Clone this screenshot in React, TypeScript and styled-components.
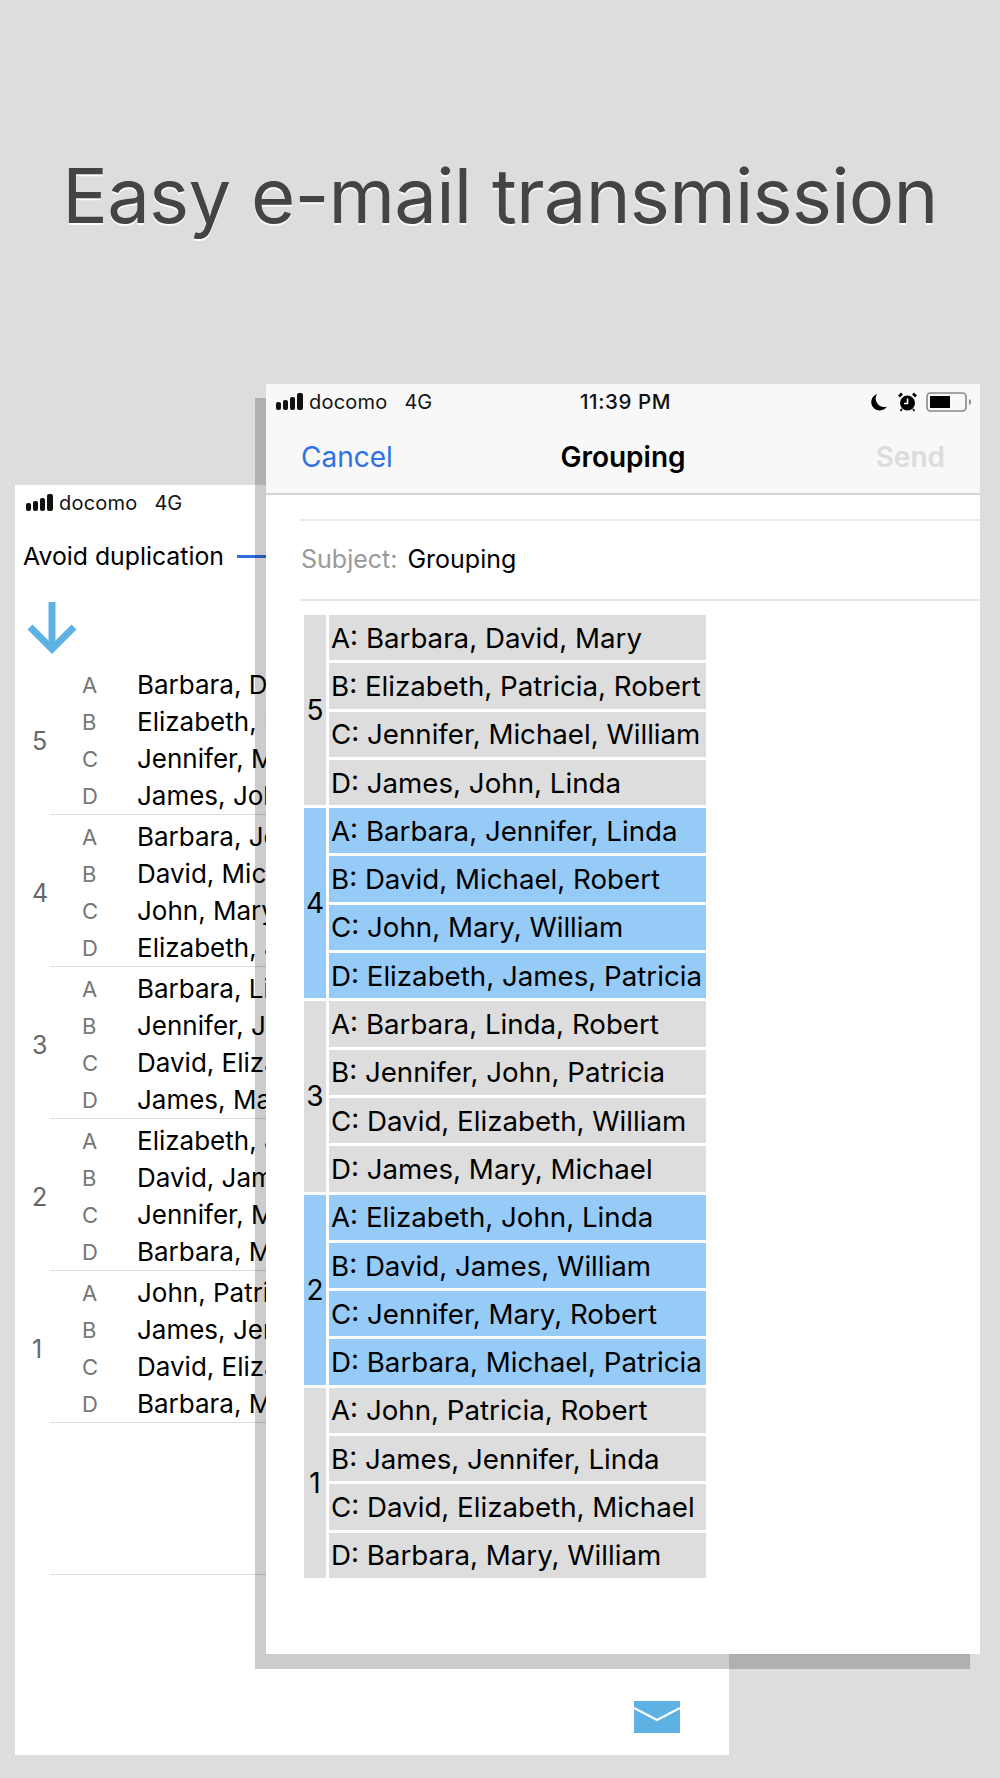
import React from "react";
import styled, { createGlobalStyle } from "styled-components";

const Global = createGlobalStyle`
  html, body { margin: 0; padding: 0; background: #dddddd; }
  * { box-sizing: border-box; }
`;

const FONT = `Inter, "Liberation Sans", sans-serif`;

const Stage = styled.div`
  position: relative;
  width: 1000px;
  height: 1778px;
  overflow: hidden;
  background: #dddddd;
  font-family: ${FONT};
  color: #000;
`;

const Title = styled.h1`
  margin: 0;
  padding-top: 150px;
  text-align: center;
  font-size: 76px;
  line-height: 90px;
  font-weight: 400;
  letter-spacing: -0.8px;
  color: #444;
  text-shadow: 0 2px 0 #fbfbfb;
  white-space: nowrap;
`;

const BackWindow = styled.section`
  position: absolute;
  left: 15px;
  top: 485px;
  width: 714px;
  height: 1270px;
  background: #fff;
`;

const WindowShadow = styled.div`
  position: absolute;
  left: 255px;
  top: 398px;
  width: 715px;
  height: 1271px;
  background: rgba(0, 0, 0, 0.2);
`;

const FrontWindow = styled.section`
  position: absolute;
  left: 266px;
  top: 384px;
  width: 714px;
  height: 1270px;
  background: #fff;
`;

const StatusBar = styled.div<{ $left: number }>`
  display: flex;
  align-items: center;
  height: 36px;
  padding-left: ${(p) => p.$left}px;
  font-size: 20px;
  line-height: 36px;
  color: #111;
`;

const Carrier = styled.span`
  margin-left: 5px;
  letter-spacing: 0.2px;
`;

const Network = styled.span`
  margin-left: 17px;
`;

const Clock = styled.span`
  position: absolute;
  left: 0;
  right: 0;
  padding-left: 5px;
  text-align: center;
  font-weight: 500;
  font-size: 20.5px;
  letter-spacing: 0.6px;
`;

const StatusIcons = styled.div`
  margin-left: auto;
  display: flex;
  align-items: center;
  padding-right: 8px;
`;

const OptionRow = styled.div`
  display: flex;
  align-items: center;
  height: 40px;
  margin-top: 15px;
  padding-left: 8px;
  font-size: 24.8px;
`;

const Slider = styled.div`
  flex: 1;
  height: 3px;
  margin-left: 13px;
  background: #2f6fe0;
`;

const ArrowWrap = styled.div`
  display: flex;
  height: 83px;
  margin-top: 5px;
  padding: 21px 0 0 12px;
`;

const Groups = styled.div`
  margin-top: -1px;
`;

const ListGroup = styled.div`
  display: flex;
  align-items: center;
  height: 152px;
  margin-left: 35px;
  padding-top: 3px;
  border-bottom: 1px solid #ddd;
`;

const ListNumber = styled.div`
  width: 50px;
  margin-left: -18px;
  font-size: 25px;
  color: #666;
  padding-top: 2px;
`;

const ListRows = styled.div`
  display: flex;
  flex-direction: column;
`;

const ListRow = styled.div`
  display: flex;
  align-items: center;
  height: 37px;
`;

const ListLetter = styled.span`
  width: 55px;
  font-size: 22px;
  color: #777;
`;

const ListNames = styled.span`
  font-size: 26px;
  white-space: nowrap;
`;

const ListSpacer = styled.div`
  height: 152px;
  margin-left: 35px;
  border-bottom: 1px solid #ddd;
`;

const BottomBar = styled.div`
  display: flex;
  justify-content: flex-end;
  padding: 126px 49px 0 0;
`;

const TopChrome = styled.header`
  height: 111px;
  background: #f8f8f8;
  border-bottom: 2px solid #d4d4d4;
`;

const NavBar = styled.div`
  display: grid;
  grid-template-columns: 1fr auto 1fr;
  align-items: center;
  height: 70px;
  margin-top: 2px;
  padding: 0 35px;
  font-size: 28px;
`;

const NavCancel = styled.span`
  color: #2f72e4;
`;

const NavTitle = styled.span`
  font-weight: 600;
`;

const NavSend = styled.span`
  font-weight: 600;
  color: #dcdcdc;
  justify-self: end;
`;

const Compose = styled.div`
  padding: 24px 0 0 34px;
`;

const SubjectRow = styled.div`
  display: flex;
  align-items: center;
  height: 82px;
  border-top: 2px solid #ececec;
  border-bottom: 2px solid #e6e6e6;
  padding: 0 0 3px 1px;
  font-size: 25px;
`;

const SubjectLabel = styled.span`
  color: #999;
  margin-right: 10px;
`;

const Table = styled.div`
  display: flex;
  flex-direction: column;
  gap: 3px;
  width: 402px;
  margin: 14px 0 0 4px;
`;

const TableGroup = styled.div`
  display: grid;
  grid-template-columns: 22px 377px;
  column-gap: 3px;
`;

const TableNumber = styled.div<{ $hi: boolean }>`
  display: flex;
  align-items: center;
  justify-content: center;
  font-size: 28px;
  background: ${(p) => (p.$hi ? "#97cbf7" : "#dddddd")};
`;

const TableRows = styled.div`
  display: flex;
  flex-direction: column;
  gap: 3px;
`;

const TableRow = styled.div<{ $hi: boolean }>`
  display: flex;
  align-items: center;
  height: 45.3px;
  padding-left: 2px;
  font-size: 27.7px;
  white-space: nowrap;
  background: ${(p) => (p.$hi ? "#97cbf7" : "#dddddd")};
`;

const groups = [
  { n: 5, rows: ["Barbara, David, Mary", "Elizabeth, Patricia, Robert", "Jennifer, Michael, William", "James, John, Linda"] },
  { n: 4, rows: ["Barbara, Jennifer, Linda", "David, Michael, Robert", "John, Mary, William", "Elizabeth, James, Patricia"] },
  { n: 3, rows: ["Barbara, Linda, Robert", "Jennifer, John, Patricia", "David, Elizabeth, William", "James, Mary, Michael"] },
  { n: 2, rows: ["Elizabeth, John, Linda", "David, James, William", "Jennifer, Mary, Robert", "Barbara, Michael, Patricia"] },
  { n: 1, rows: ["John, Patricia, Robert", "James, Jennifer, Linda", "David, Elizabeth, Michael", "Barbara, Mary, William"] },
];
const LETTERS = ["A", "B", "C", "D"];

const Signal = () => (
  <svg width="28" height="18" viewBox="0 0 28 18" fill="#111">
    <rect x="0" y="9" width="5" height="8" rx="2" />
    <rect x="7" y="7" width="5" height="10" rx="2" />
    <rect x="14" y="4" width="5" height="13" rx="2" />
    <rect x="21" y="0" width="6" height="17" rx="2" />
  </svg>
);

const Moon = () => (
  <svg width="18" height="20" viewBox="0 0 18 20" style={{ marginRight: 10 }}>
    <path d="M7 2 A8.5 8.5 0 1 0 17 14.5 A8.5 8.5 0 0 1 7 2 Z" fill="#000" />
  </svg>
);

const Alarm = () => (
  <svg width="19" height="20" viewBox="0 0 19 20" style={{ marginRight: 9 }}>
    <circle cx="9.5" cy="11" r="7.5" fill="#000" />
    <path d="M9.5 6.5 V11.5 H6" stroke="#fff" strokeWidth="1.6" fill="none" />
    <path d="M1 4.5 L4 1.5 M18 4.5 L15 1.5" stroke="#000" strokeWidth="2.6" />
    <path d="M4 17 L2.5 19 M15 17 L16.5 19" stroke="#000" strokeWidth="1.6" />
  </svg>
);

const Battery = () => (
  <svg width="46" height="20" viewBox="0 0 46 20">
    <rect x="1" y="1" width="39" height="18" rx="3.5" fill="none" stroke="#888" strokeWidth="1.6" />
    <rect x="4" y="4" width="20" height="12" fill="#000" />
    <path d="M43 7 C44.5 7.5 45 8.5 45 10 C45 11.5 44.5 12.5 43 13 Z" fill="#888" />
  </svg>
);

const DownArrow = () => (
  <svg width="50" height="52" viewBox="0 0 50 52" fill="none" stroke="#5db2e3" strokeWidth="7">
    <path d="M25 0 V47" />
    <path d="M3 25 L25 47 L47 25" />
  </svg>
);

const Mail = () => (
  <svg width="46" height="32" viewBox="0 0 46 32">
    <rect width="46" height="32" fill="#5db2e3" />
    <path d="M0 7 L23 19 L46 7" fill="none" stroke="#fff" strokeWidth="2.4" />
  </svg>
);

export default function App() {
  return (
    <Stage>
      <Global />
      <Title>Easy e-mail transmission</Title>

      <BackWindow>
        <StatusBar $left={11}>
          <Signal />
          <Carrier>docomo</Carrier>
          <Network>4G</Network>
        </StatusBar>
        <OptionRow>
          Avoid duplication
          <Slider />
        </OptionRow>
        <ArrowWrap>
          <DownArrow />
        </ArrowWrap>
        <Groups>
          {groups.map((g) => (
            <ListGroup key={g.n}>
              <ListNumber>{g.n}</ListNumber>
              <ListRows>
                {g.rows.map((r, i) => (
                  <ListRow key={i}>
                    <ListLetter>{LETTERS[i]}</ListLetter>
                    <ListNames>{r}</ListNames>
                  </ListRow>
                ))}
              </ListRows>
            </ListGroup>
          ))}
          <ListSpacer />
        </Groups>
        <BottomBar>
          <Mail />
        </BottomBar>
      </BackWindow>

      <WindowShadow />

      <FrontWindow>
        <TopChrome>
          <StatusBar $left={10}>
            <Signal />
            <Carrier>docomo</Carrier>
            <Network>4G</Network>
            <Clock>11:39 PM</Clock>
            <StatusIcons>
              <Moon />
              <Alarm />
              <Battery />
            </StatusIcons>
          </StatusBar>
          <NavBar>
            <NavCancel>Cancel</NavCancel>
            <NavTitle>Grouping</NavTitle>
            <NavSend>Send</NavSend>
          </NavBar>
        </TopChrome>
        <Compose>
          <SubjectRow>
            <SubjectLabel>Subject:</SubjectLabel>
            Grouping
          </SubjectRow>
          <Table>
            {groups.map((g) => {
              const hi = g.n % 2 === 0;
              return (
                <TableGroup key={g.n}>
                  <TableNumber $hi={hi}>{g.n}</TableNumber>
                  <TableRows>
                    {g.rows.map((r, i) => (
                      <TableRow key={i} $hi={hi}>
                        {LETTERS[i]}: {r}
                      </TableRow>
                    ))}
                  </TableRows>
                </TableGroup>
              );
            })}
          </Table>
        </Compose>
      </FrontWindow>
    </Stage>
  );
}
